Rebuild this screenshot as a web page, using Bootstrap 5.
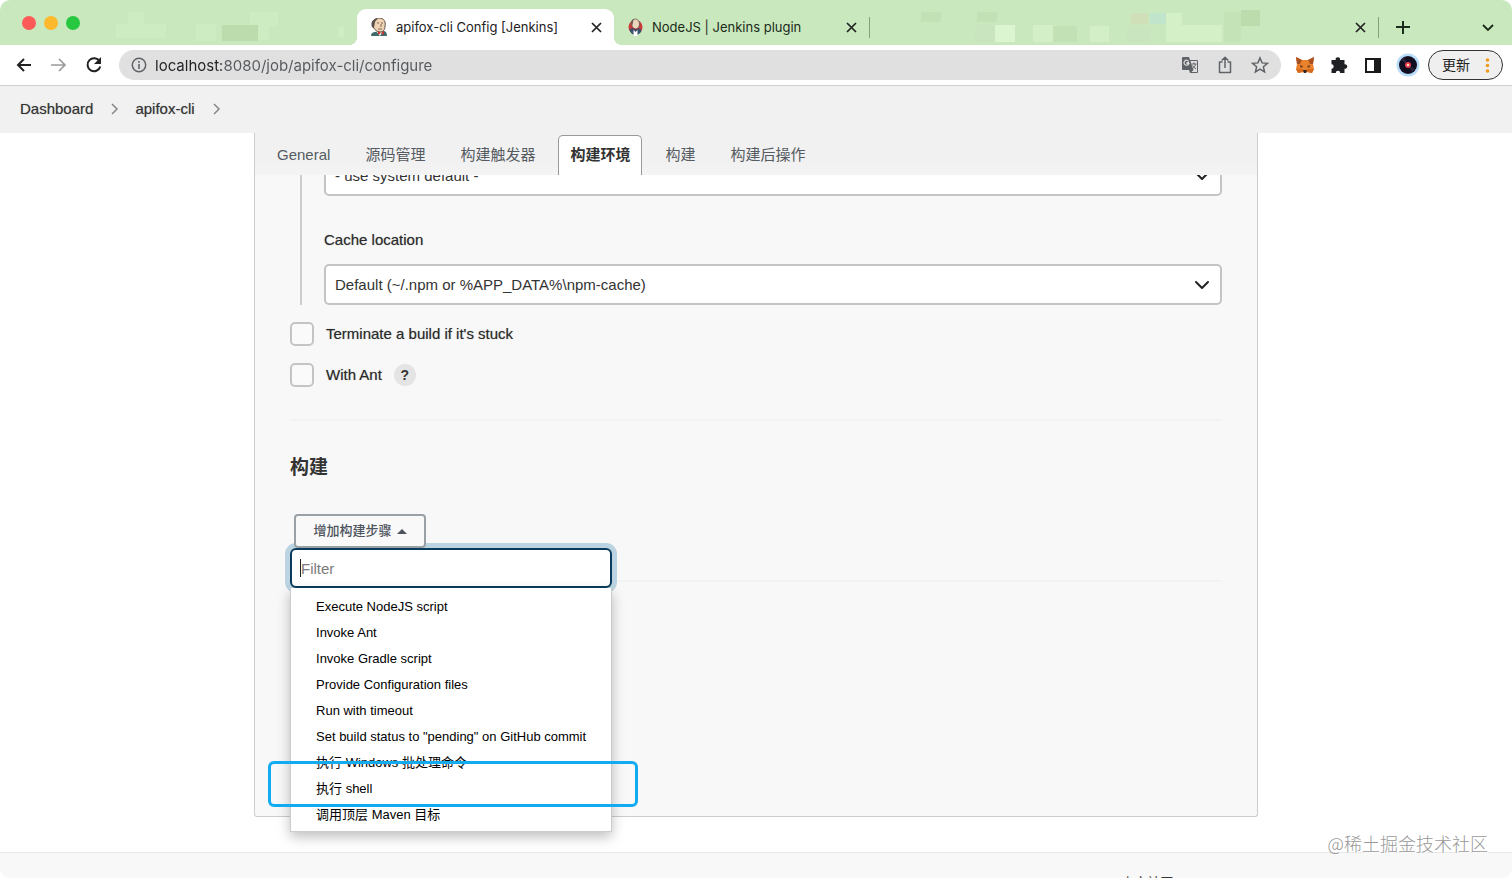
<!DOCTYPE html>
<html lang="zh-CN">
<head>
<meta charset="utf-8">
<meta name="viewport" content="width=device-width, initial-scale=1">
<title>apifox-cli Config [Jenkins]</title>
<link href="https://cdn.jsdelivr.net/npm/bootstrap@5.3.0/dist/css/bootstrap.min.css" rel="stylesheet">
<style>
  html { background: #fff; }
  body { font-family: "Liberation Sans", "Noto Sans CJK SC", sans-serif; font-size: 15px; line-height: 20px; color: #333; background: #fff; }
  svg { display: block; flex: none; }
  .window { height: 100vh; border-radius: 10px; }
  .chrome-ui { font-family: Inter, "Noto Sans CJK SC", sans-serif; }
  .icon-btn { border: 0; padding: 0; background: none; color: inherit; display: flex; align-items: center; justify-content: center; flex: none; }

  /* tab strip */
  .tabstrip { height: 45px; background: #cae8bd; color: #1b2b1b; font-size: 13px; }
  .strip-start { width: 357px; padding-left: 22px; gap: 8px; }
  .light { width: 14px; height: 14px; border-radius: 50%; border: 0; padding: 0; }
  .light-close { background: #fc5b57; }
  .light-min { background: #fdb92e; }
  .light-zoom { background: #27c840; }
  .browser-tab { height: 36px; margin-top: 9px; padding: 0 11px 0 13px; width: 255px; gap: 8px; }
  .browser-tab a { color: inherit; text-decoration: none; white-space: nowrap; }
  .tab-current { width: 257px; background: #fff; border-radius: 9px 9px 0 0; color: #222; position: relative; }
  .tab-current::before, .tab-current::after { content: ""; position: absolute; bottom: 0; width: 8px; height: 8px; }
  .tab-current::before { left: -8px; background: radial-gradient(circle at 0 0, transparent 8px, #fff 8px); }
  .tab-current::after { right: -8px; background: radial-gradient(circle at 100% 0, transparent 8px, #fff 8px); }
  .tab-line { width: 1px; height: 21px; margin-top: 17px; background: #86a07f; flex: none; }
  .strip-end { width: 133px; margin-top: 9px; height: 36px; padding: 0 17px 0 16px; }

  /* toolbar */
  .toolbar { height: 41px; padding: 0 9px 0 14px; gap: 15px; border-bottom: 1px solid #cfcfcf; background: #fff; color: #202124; }
  .omnibox { height: 30px; border-radius: 15px; background: #e0e0e0; padding: 0 12px; gap: 16px; color: #5f6368; }
  .omnibox input { border: 0; outline: 0; padding: 1px 0 0; font-size: 15px; line-height: 20px; background: linear-gradient(90deg, #202124 66px, #55585c 66px); -webkit-background-clip: text; background-clip: text; color: transparent; }
  .account { gap: 8px; }
  .update-btn { height: 30px; width: 75px; border: 1px solid #333; border-radius: 15px; background: #efefef; color: #222; font-size: 14px; padding: 0 12px 0 13px; }

  /* jenkins */
  .crumbs { height: 47px; background: #f1f1f1; padding: 0 20px 1px; }
  .crumbs a { color: #333; text-decoration: none; }
  .config-wrap { padding: 0 16.8%; }
  .config-panel { background: #f8f8f8; border: 1px solid #ccc; border-top: 0; border-radius: 0 0 3px 3px; }
  .config-tabs { height: 42px; background: linear-gradient(#f1f1f1 70%, #f4f4f4); padding: 2px 10px 0; gap: 11px; position: relative; z-index: 2; }
  .config-tabs a { color: #555b61; text-decoration: none; border: 1px solid transparent; border-bottom: 0; border-radius: 5px 5px 0 0; padding: 9px 11px; height: 40px; }
  .config-tabs a.current { background: #fff; border-color: #999; color: #333; font-weight: 700; }
  .config-body { padding: 0 35px; margin-top: -20px; }
  .nested { margin-left: 10px; padding-left: 22px; border-left: 2px solid #ccc; }
  .pick { height: 41px; border: 2px solid #c3c5c5; border-radius: 5px; padding: 2px 36px 0 9px; font-size: 15px; color: #333; background-color: #fff; background-size: 16px 12px; background-position: right 10px center;
    background-image: url("data:image/svg+xml,%3Csvg xmlns='http://www.w3.org/2000/svg' viewBox='0 0 16 12'%3E%3Cpath d='M2 3l6 6 6-6' fill='none' stroke='%23222' stroke-width='2' stroke-linecap='round' stroke-linejoin='round'/%3E%3C/svg%3E"); }
  .field-name { display: block; padding: 34px 0 14px; }
  .check-row { height: 24px; gap: 12px; margin-top: 17px; }
  .check-row .form-check-input { width: 24px; height: 24px; margin: 0; border: 2px solid #c3c5c5; border-radius: 5px; background-color: #fafafa; }
  .strong-ink { color: #2a2a2a; text-shadow: 0 0 1px #9a9a9a; }
  .help-btn { width: 22px; height: 22px; border-radius: 50%; background: #e4e4e4; font-weight: 700; font-size: 14px; color: #333; }
  .rule { height: 2px; margin-top: 32px; background: #f3f3f3; }
  .section-title { font-size: 19px; line-height: 28px; font-weight: 700; color: #333; margin: 33px 0 32px; }
  .add-step { height: 34px; width: 132px; margin-left: 4px; border: 2px solid #99a1a6; border-radius: 4px; background: #f9f9f9; color: #4d545d; font-size: 13px; font-weight: 500; padding: 0; gap: 5px; position: relative; z-index: 4; }
  .step-menu { top: 34px; left: 0; width: 322px; z-index: 3; }
  .step-filter { position: relative; z-index: 1; }
  .step-filter input { display: block; height: 40px; width: 100%; border: 2px solid #0b3b5c; border-radius: 6px; box-shadow: 0 0 0 5px #bcd4e2; padding: 0 9px; font-size: 15px; background: #fff; outline: 0; }
  .step-filter input::placeholder { color: #7b7b7b; opacity: 1; }
  .caret { position: absolute; left: 10px; top: 11px; width: 1px; height: 18px; background: #222; }
  .step-list { background: #fff; border: 1px solid #ccc; border-top: 0; box-shadow: 0 5px 12px #00000040; padding: 6px 0 3px; margin: 0; position: relative; z-index: 2; }
  .step-list li { position: relative; }
  .step-list a { display: block; font-size: 13px; line-height: 26px; padding: 0 0 0 25px; white-space: nowrap; color: #000; text-decoration: none; }
  .spotlight { position: absolute; left: -23px; right: -27px; top: -15px; height: 46px; border: 3px solid #12aaf0; border-radius: 6px; z-index: 1; pointer-events: none; }
  .panel-end { height: 234px; }
  .page-foot { margin-top: 35px; flex: none; height: 60px; border-top: 1px solid #e8e8e8; background: #f8f8f8; font-size: 13px; padding: 20px 22.4% 0 20px; }
  .page-foot a { color: #333; text-decoration: none; }
  .watermark { right: 24px; bottom: 23px; font-family: "Noto Sans CJK SC", sans-serif; font-size: 18px; line-height: 24px; font-weight: 300; color: #999; text-shadow: 1px 1px 0 #fff; z-index: 4; }
</style>
</head>
<body>
<div class="window d-flex flex-column overflow-hidden position-relative">

  <header class="chrome-ui flex-shrink-0">
    <div class="tabstrip d-flex">
      <div class="strip-start d-flex align-items-center flex-shrink-0">
        <button class="light light-close" aria-label="Close window"></button>
        <button class="light light-min" aria-label="Minimise window"></button>
        <button class="light light-zoom" aria-label="Zoom window"></button>
        <svg class="ms-3" width="245" height="45" viewBox="0 0 245 45" aria-hidden="true">
          <g fill="#c6e6b8"><path d="M40 24h22v14H40z"/><path fill="#cdecc1" d="M24 12h16v12h22v14H12V24h12zM92 24h20v17H92zM146 12h28v14h-9v14h-19z"/><path fill="#bcdcae" d="M118 25h36v16h-36z"/><path fill="#cfedc3" d="M240 27h-6v10h6z"/></g>
        </svg>
      </div>

      <div class="browser-tab tab-current d-flex align-items-center flex-shrink-0">
        <svg width="18" height="18" viewBox="0 0 18 18" aria-hidden="true">
          <path d="M1 18c0-3 2-4 4-4l8-1c3 0 4 2 4 5z" fill="#3f6a6b"/><path d="M6 13l4 5 3-5z" fill="#fff"/>
          <path d="M3 9C1 4 4 0 9 0s7 4 6 8c0 4-2 6-5 6s-5-2-7-5z" fill="#efd3b2" stroke="#4a403b" stroke-width=".9"/>
          <path d="M2 9C0 4 4 0 8 1 4 3 5 6 4 10z" fill="#5b514b"/><path d="M7 5h2M11 5h2M8 11h4M11 6v3" stroke="#614b41" stroke-width=".8" fill="none"/>
          <path d="M8 13l3 2-3 2zm6 0l-3 2 3 2z" fill="#c9342f"/>
        </svg>
        <a href="#">apifox-cli Config [Jenkins]</a>
        <button class="icon-btn ms-auto" aria-label="Close tab"><svg width="13" height="13" viewBox="0 0 13 13"><path d="M2 2l9 9M11 2l-9 9" stroke="#222" stroke-width="1.7"/></svg></button>
      </div>

      <div class="browser-tab d-flex align-items-center flex-shrink-0">
        <svg width="17" height="18" viewBox="0 0 16 18" aria-hidden="true">
          <circle cx="8" cy="9" r="7" fill="#c83a38"/><path d="M2 12c1-2 4-2 6-2s5 0 6 3c-1 2-3 4-6 4s-5-2-6-5z" fill="#38516d"/>
          <path d="M4 5c0-3 2-4 4-4s4 2 4 5-2 5-4 5-4-3-4-6z" fill="#ead5bd" stroke="#5d4d46" stroke-width=".7"/><path d="M4 6c-1-3 1-5 3-5-2 2-1 3-2 6z" fill="#6b5c55"/>
          <path d="M6 12l2 2 2-2v6H6z" fill="#fff"/><path d="M6 10l2 1 2-1v2l-2-1-2 1z" fill="#b4282c"/>
        </svg>
        <a href="#">NodeJS | Jenkins plugin</a>
        <button class="icon-btn ms-auto" aria-label="Close tab"><svg width="13" height="13" viewBox="0 0 13 13"><path d="M2 2l9 9M11 2l-9 9" stroke="#222" stroke-width="1.7"/></svg></button>
      </div>
      <span class="tab-line"></span>

      <div class="browser-tab d-flex align-items-center flex-grow-1">
        <svg width="400" height="36" viewBox="0 0 400 36" aria-hidden="true">
          <path fill="#c2e1b5" d="M38 3h20v10H38zM94 3h20v10H94zM170 17h24v16h-24z"/><path fill="#daf5d0" d="M112 16h20v17h-20z"/><path fill="#d3efc8" d="M150 16h20v17h-20zM207 17h19v16h-19z"/>
          <path fill="#c8e5bf" d="M92 16h20v17H92zM244 18h24v15h-24z"/><path fill="#d0dfb7" d="M248 4h17v11h-17z"/><path fill="#c1e5cc" d="M267 4h17v11h-17z"/><path fill="#d3f0c7" d="M283 4h16v12h40v17h-56z"/><path fill="#bddcae" d="M358 1h19v16h-19z"/><path fill="#c4e3b7" d="M341 3h17v30h-17z"/>
        </svg>
        <button class="icon-btn ms-auto" aria-label="Close tab"><svg width="13" height="13" viewBox="0 0 13 13"><path d="M2 2l9 9M11 2l-9 9" stroke="#222" stroke-width="1.7"/></svg></button>
      </div>
      <span class="tab-line"></span>
      <div class="strip-end d-flex align-items-center justify-content-between flex-shrink-0">
        <button class="icon-btn" aria-label="New tab"><svg width="16" height="16" viewBox="0 0 16 16"><path d="M8 2v13M1 8h14" stroke="#1b2b1b" stroke-width="2"/></svg></button>
        <button class="icon-btn" aria-label="Search tabs"><svg width="14" height="14" viewBox="0 0 14 14"><path d="M2 5l5 5 5-5" fill="none" stroke="#1b2b1b" stroke-width="1.8"/></svg></button>
      </div>
    </div>

    <div class="toolbar d-flex align-items-center">
      <button class="icon-btn" aria-label="Back"><svg width="20" height="20" viewBox="0 0 20 20"><path d="M17 10H4M10 4l-6 6 6 6" fill="none" stroke="#222" stroke-width="2"/></svg></button>
      <button class="icon-btn" aria-label="Forward"><svg width="20" height="20" viewBox="0 0 20 20"><path d="M2 10h13M10 4l6 6-6 6" fill="none" stroke="#9a9a9a" stroke-width="1.7"/></svg></button>
      <button class="icon-btn" aria-label="Reload"><svg width="20" height="20" viewBox="0 0 20 20"><path d="M15.600 6.300A6.500 6.500 0 1 0 16.300 11.500" fill="none" stroke="#222" stroke-width="2"/><path d="M17 2v7h-7z" fill="#222"/></svg></button>
      <div class="omnibox d-flex align-items-center flex-grow-1">
        <label class="d-flex align-items-center flex-grow-1 gap-2">
          <svg width="16" height="16" viewBox="0 0 16 16" aria-hidden="true"><circle cx="8" cy="8" r="6.700" fill="none" stroke="#5f6368" stroke-width="1.500"/><path d="M8 7v5M8 4v1.700" stroke="#5f6368" stroke-width="1.600"/></svg>
          <input class="flex-grow-1" type="text" aria-label="Address" value="localhost:8080/job/apifox-cli/configure">
        </label>
        <button class="icon-btn" aria-label="Translate"><svg width="18" height="18" viewBox="0 0 18 18"><path d="M2 1h6l1 3h7q1 0 1 1v11q0 1-1 1H9l-1-3H2q-1 0-1-1V2q0-1 1-1z" fill="#5f6368"/><path d="M9.500 5H16v11h-5.500l2-2-1.500-4z" fill="#e0e0e0"/><path d="M8 6.500H5.500M7.700 5.500a2.500 2.500 0 1 0 .2 2H5.500" stroke="#e0e0e0" stroke-width="1.200" fill="none"/><path d="M10.500 8h5M13 6.500V8M14.500 8c0 2-2 4-3 4.500M11.500 9.500c1 1.500 2 2.500 3.500 3.500" stroke="#5f6368" fill="none"/></svg></button>
        <button class="icon-btn" aria-label="Share"><svg width="20" height="20" viewBox="0 0 20 20"><path d="M7.500 7H4.500v10.500h11V7h-3M10 13V2.500M6.700 5.500L10 2.200l3.300 3.300" fill="none" stroke="#5f6368" stroke-width="1.500" stroke-linejoin="round"/></svg></button>
        <button class="icon-btn" aria-label="Bookmark"><svg width="18" height="18" viewBox="0 0 18 18"><path d="M9 2l2.100 4.900 5.300.4-4 3.500 1.200 5.200L9 13.200 4.400 16l1.200-5.200-4-3.500 5.300-.4z" fill="none" stroke="#5f6368" stroke-width="1.500"/></svg></button>
      </div>
      <button class="icon-btn" aria-label="MetaMask"><svg width="18" height="18" viewBox="0 0 18 18"><path d="M0 1l6 3h6l6-3-1 7 1 5-2 4-5-1-1 1H8l-1-1-5 1-2-4 1-5z" fill="#e9822b"/><path d="M0 1l6 3-2 4H1zM18 1l-6 3 2 4h3z" fill="#a85120"/><path d="M4 9l3 1-1 2-2-1zM14 9l-3 1 1 2 2-1z" fill="#7a4a26"/><path d="M7 14h4l-1 3H8z" fill="#2f2723"/><path d="M2 17l5-1v-3l-7 0zM16 17l-5-1v-3h7z" fill="#d76b20"/></svg></button>
      <button class="icon-btn" aria-label="Extensions"><svg width="20" height="20" viewBox="0 0 20 20"><path d="M2.500 5h4.200a2.200 2.200 0 1 1 4.300 0h4.500v4.300a2.300 2.300 0 1 1 0 4.500V18h-4.300a2.200 2.200 0 0 0-4.400 0H2.500v-4.300a2.200 2.200 0 0 0 0-4.400z" fill="#202124"/></svg></button>
      <button class="icon-btn" aria-label="Side panel"><svg width="17" height="17" viewBox="0 0 17 17"><path d="M1 1h15v15H1z" fill="#fff"/><path d="M1 1h16v15H1zM3 3v11h7V3z" fill="#1b1b1b" fill-rule="evenodd"/></svg></button>
      <div class="account d-flex align-items-center flex-shrink-0">
        <button class="icon-btn" aria-label="Profile"><svg width="24" height="24" viewBox="0 0 24 24"><circle cx="12" cy="12" r="11.500" fill="#b9dcf8"/><circle cx="12" cy="12" r="9" fill="#100e20"/><path d="M12 12L5 7l3-3zM12 12l7 4-3 3z" fill="#26233a"/><circle cx="12" cy="12" r="3" fill="#e8394b"/><circle cx="12" cy="12" r="1.300" fill="#ffd9bd"/></svg></button>
        <button class="update-btn d-flex align-items-center justify-content-between">更新<svg width="5" height="15" viewBox="0 0 5 15" fill="#f29a1f"><circle cx="2.500" cy="2" r="1.800"/><circle cx="2.500" cy="7.500" r="1.800"/><circle cx="2.500" cy="13" r="1.800"/></svg></button>
      </div>
    </div>
  </header>

  <nav class="crumbs d-flex align-items-center flex-shrink-0 strong-ink" aria-label="breadcrumb">
    <a href="#">Dashboard</a>
    <svg class="mx-3" width="10" height="12" viewBox="0 0 10 12"><path d="M3 1l5 5-5 5" fill="none" stroke="#888" stroke-width="1.500"/></svg>
    <a href="#">apifox-cli</a>
    <svg class="mx-3" width="10" height="12" viewBox="0 0 10 12"><path d="M3 1l5 5-5 5" fill="none" stroke="#888" stroke-width="1.500"/></svg>
  </nav>

  <main class="config-wrap flex-shrink-0">
    <form class="config-panel">
      <nav class="config-tabs d-flex">
        <a href="#">General</a><a href="#">源码管理</a><a href="#">构建触发器</a><a class="current" href="#">构建环境</a><a href="#">构建</a><a href="#">构建后操作</a>
      </nav>

      <div class="config-body">
        <div class="nested">
          <select class="form-select pick" aria-label="npmrc file"><option>- use system default -</option></select>
          <label class="field-name strong-ink" for="cache">Cache location</label>
          <select class="form-select pick" id="cache"><option>Default (~/.npm or %APP_DATA%\npm-cache)</option></select>
        </div>
        <div class="check-row d-flex align-items-center">
          <input class="form-check-input" type="checkbox" id="stuck"><label class="strong-ink" for="stuck">Terminate a build if it's stuck</label>
        </div>
        <div class="check-row d-flex align-items-center">
          <input class="form-check-input" type="checkbox" id="ant"><label class="strong-ink" for="ant">With Ant</label>
          <button type="button" class="icon-btn help-btn" aria-label="Help for With Ant">?</button>
        </div>
        <div class="rule"></div>
        <h2 class="section-title">构建</h2>
        <div class="position-relative">
          <button type="button" class="add-step d-flex align-items-center justify-content-center">增加构建步骤<svg width="10" height="6" viewBox="0 0 10 6"><path d="M0 6l5-5 5 5z" fill="#4d545d"/></svg></button>
          <div class="step-menu position-absolute">
            <div class="step-filter"><input type="text" placeholder="Filter" aria-label="Filter"><span class="caret"></span></div>
            <ul class="step-list list-unstyled">
              <li><a href="#">Execute NodeJS script</a></li>
              <li><a href="#">Invoke Ant</a></li>
              <li><a href="#">Invoke Gradle script</a></li>
              <li><a href="#">Provide Configuration files</a></li>
              <li><a href="#">Run with timeout</a></li>
              <li><a href="#">Set build status to "pending" on GitHub commit</a></li>
              <li><a href="#">执行 Windows 批处理命令</a></li>
              <li><a href="#">执行 shell</a><span class="spotlight"></span></li>
              <li><a href="#">调用顶层 Maven 目标</a></li>
            </ul>
          </div>
        </div>
        <div class="rule"></div>
        <div class="panel-end"></div>
      </div>
    </form>
  </main>

  <footer class="page-foot d-flex justify-content-end">
    <a href="#">Jenkins中文社区</a>
  </footer>
  <div class="watermark position-absolute">@稀土掘金技术社区</div>
</div>
<script src="https://cdn.jsdelivr.net/npm/bootstrap@5.3.0/dist/js/bootstrap.bundle.min.js"></script>
</body>
</html>
